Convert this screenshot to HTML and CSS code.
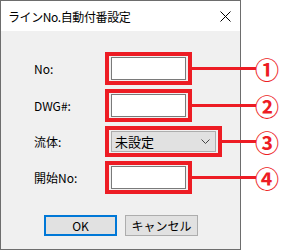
FILE: index.html
```html
<!DOCTYPE html>
<html lang="ja">
<head>
    <meta charset="UTF-8">
    <meta name="viewport" content="width=device-width, initial-scale=1.0">
    <title>ラインNo.自動付番設定</title>
    <link rel="stylesheet" href="styles.css">
</head>
<body>
    <div class="dialog">
        <div class="titlebar">
            <span class="title">ラインNo.自動付番設定</span>
            <span class="close">
                <svg width="11" height="11" viewBox="0 0 11 11">
                    <path d="M0.5 0.5 L10.5 10.5 M10.5 0.5 L0.5 10.5" stroke="#000" stroke-width="1" fill="none"/>
                </svg>
            </span>
        </div>

        <div class="content">
            <div class="row row-first">
                <label class="label" for="lineNo">No:</label>
                <div class="mark"><input class="field" type="text" id="lineNo"></div>
                <span class="lead"></span>
                <span class="num">①</span>
            </div>

            <div class="row">
                <label class="label" for="dwg">DWG#:</label>
                <div class="mark"><input class="field" type="text" id="dwg"></div>
                <span class="lead"></span>
                <span class="num">②</span>
            </div>

            <div class="row">
                <label class="label" for="fluid">流体:</label>
                <div class="mark">
                    <div class="combo" id="fluid">
                        <span>未設定</span>
                        <svg width="9" height="5" viewBox="0 0 9 5">
                            <path d="M0.5 0.5 L4.5 4.5 L8.5 0.5" stroke="#444" stroke-width="1" fill="none"/>
                        </svg>
                    </div>
                </div>
                <span class="lead"></span>
                <span class="num">③</span>
            </div>

            <div class="row">
                <label class="label" for="startNo">開始No:</label>
                <div class="mark"><input class="field" type="text" id="startNo"></div>
                <span class="lead"></span>
                <span class="num">④</span>
            </div>

            <div class="buttons">
                <button class="btn btn-default">OK</button>
                <button class="btn">キャンセル</button>
            </div>
        </div>
    </div>
</body>
</html>
```

FILE: styles.css
```css
body {
    margin: 0;
    padding: 0;
    background-color: #fff;
    font-family: "Noto Sans CJK JP", "Noto Sans", sans-serif;
    font-size: 12px;
    color: #000;
}

.dialog {
    width: 239px;
    height: 248px;
    border: 1px solid #6d6d6d;
    background-color: #f0f0f0;
}

.titlebar {
    height: 30px;
    background-color: #fff;
    display: flex;
    align-items: center;
    justify-content: space-between;
    padding: 0 9px 0 7px;
}

.title {
    font-size: 12px;
    letter-spacing: -0.4px;
}

.close {
    display: flex;
}

.content {
    padding: 21px 0 0 33px;
}

.row {
    width: 244px;
    display: flex;
    align-items: center;
    margin-top: 4px;
}

.row-first {
    margin-top: 0;
}

.label {
    width: 71px;
    flex-shrink: 0;
}

.mark {
    border: 4px solid #ed1c24;
    padding: 1px 2px;
    display: flex;
}

.field {
    width: 75px;
    height: 23px;
    margin: 0;
    padding: 0;
    border: 1px solid #7a7a7a;
    background-color: #fff;
    box-sizing: border-box;
}

.combo {
    width: 105px;
    height: 21px;
    border: 1px solid #adadad;
    background-color: #e1e1e1;
    box-sizing: border-box;
    display: flex;
    align-items: center;
    justify-content: space-between;
    padding: 0 5px 0 3px;
    font-size: 13px;
}

.lead {
    flex: 1;
    height: 3px;
    background-color: #ed1c24;
}

.num {
    width: 23px;
    margin-left: -1px;
    font-size: 24px;
    font-weight: bold;
    line-height: 1;
    color: #ed1c24;
}

.buttons {
    display: flex;
    gap: 8px;
    margin: 21px 0 0 10px;
}

.btn {
    width: 73px;
    height: 21px;
    margin: 0;
    padding: 0;
    border: 1px solid #adadad;
    background-color: #e1e1e1;
    font-family: inherit;
    font-size: 12px;
    box-sizing: border-box;
}

.btn-default {
    border: 2px solid #0078d7;
}
```
